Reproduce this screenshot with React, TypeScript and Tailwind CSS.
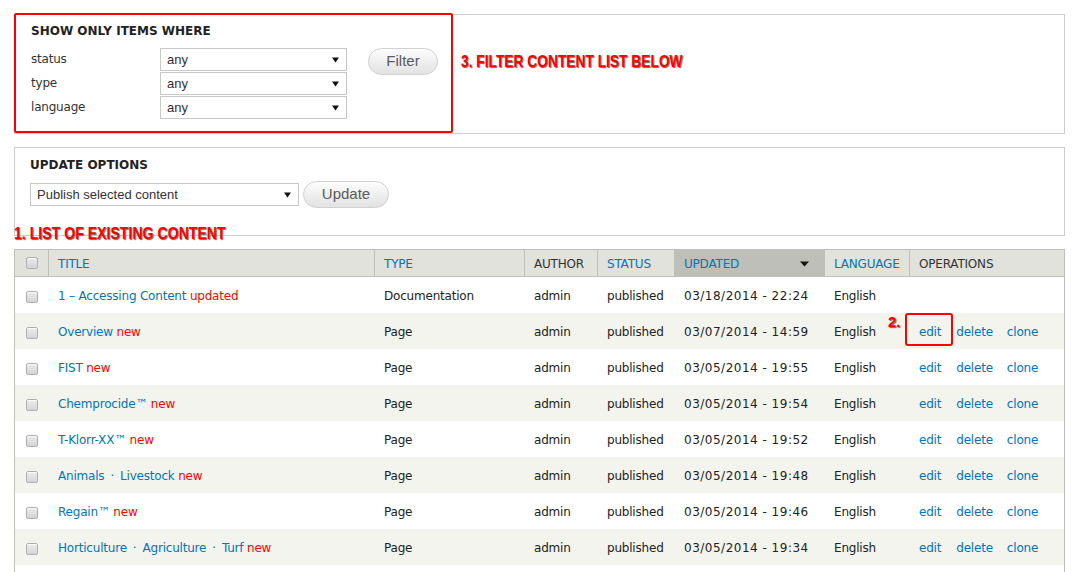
import React from 'react';

type Row = {
  title: string[];
  flag: string;
  type: string;
  updated: string;
  ops: boolean;
};

const rows: Row[] = [
  { title: ['1 – Accessing Content'], flag: 'updated', type: 'Documentation', updated: '03/18/2014 - 22:24', ops: false },
  { title: ['Overview'], flag: 'new', type: 'Page', updated: '03/07/2014 - 14:59', ops: true },
  { title: ['FIST'], flag: 'new', type: 'Page', updated: '03/05/2014 - 19:55', ops: true },
  { title: ['Chemprocide™'], flag: 'new', type: 'Page', updated: '03/05/2014 - 19:54', ops: true },
  { title: ['T-Klorr-XX™'], flag: 'new', type: 'Page', updated: '03/05/2014 - 19:52', ops: true },
  { title: ['Animals', 'Livestock'], flag: 'new', type: 'Page', updated: '03/05/2014 - 19:48', ops: true },
  { title: ['Regain™'], flag: 'new', type: 'Page', updated: '03/05/2014 - 19:46', ops: true },
  { title: ['Horticulture', 'Agriculture', 'Turf'], flag: 'new', type: 'Page', updated: '03/05/2014 - 19:34', ops: true },
];

function Caret() {
  return (
    <svg width="7" height="6" viewBox="0 0 7 6" className="shrink-0">
      <path d="M0 0.5h7L3.5 5.5z" fill="#111" />
    </svg>
  );
}

function Checkbox() {
  return (
    <span className="block h-[12px] w-[12px] rounded-[2px] border border-[#b0b0b0] bg-linear-to-b from-[#ececec] to-[#d4d4d4] shadow-[inset_0_1px_0_#fafafa]" />
  );
}

function SelectBox({ value, className }: { value: string; className: string }) {
  return (
    <div
      className={`flex h-[23px] items-center justify-between border border-[#c8c8c8] bg-white pl-[6px] pr-[7px] font-['Liberation_Sans',sans-serif] text-[13px] tracking-normal text-[#333] ${className}`}
    >
      <span>{value}</span>
      <Caret />
    </div>
  );
}

function Button({ label, className }: { label: string; className: string }) {
  return (
    <button
      className={`flex h-[27px] items-center justify-center rounded-full border border-[#d0d0d0] bg-linear-to-b from-[#fdfdfd] to-[#e2e2e2] font-['Liberation_Sans',sans-serif] text-[15px] tracking-normal text-[#5a5a5a] ${className}`}
    >
      {label}
    </button>
  );
}

const note =
  "whitespace-nowrap font-['Liberation_Sans',sans-serif] font-bold leading-[20px] tracking-normal text-[#f00] [text-shadow:1px_1px_1px_#666] origin-left";

const cols = 'grid grid-cols-[33px_326px_150px_73px_77px_150px_85px_155px]';

export default function App() {
  return (
    <div className="h-[572px] overflow-hidden bg-white pl-[14px] pt-[14px] font-['DejaVu_Sans',sans-serif] text-[12px] tracking-[-0.2px] text-[#222]">
      <div className="w-[1051px]">
        {/* filters */}
        <div className="flex h-[120px] border border-[#ccc]">
          <div className="-ml-px -mt-[2px] h-[120px] w-[439px] shrink-0 rounded-[2px] border-2 border-[#f00] pl-[15px] pt-[9px]">
            <h2 className="font-bold leading-[15px] tracking-normal">SHOW ONLY ITEMS WHERE</h2>
            <div className="mt-[9px] flex items-start">
              <div className="grid grid-cols-[129px_187px] gap-y-px text-[#333]">
                <span className="self-center leading-[15px]">status</span>
                <SelectBox value="any" className="w-[187px]" />
                <span className="self-center leading-[15px]">type</span>
                <SelectBox value="any" className="w-[187px]" />
                <span className="self-center leading-[15px]">language</span>
                <SelectBox value="any" className="w-[187px]" />
              </div>
              <Button label="Filter" className="ml-[21px] w-[70px]" />
            </div>
          </div>
          <div className={`ml-[8px] mt-[37px] self-start scale-x-[0.81] text-[17px] ${note}`}>3. FILTER CONTENT LIST BELOW</div>
        </div>

        {/* update options */}
        <div className="relative mt-[13px] h-[89px] border border-[#ccc] px-[15px] pt-[10px]">
          <h2 className="font-bold leading-[15px] tracking-normal">UPDATE OPTIONS</h2>
          <div className="mt-[8px] flex h-[27px] items-center">
            <SelectBox value="Publish selected content" className="w-[269px]" />
            <Button label="Update" className="ml-[4px] w-[86px]" />
          </div>
          <div className={`absolute -left-px top-[76px] scale-x-[0.83] text-[17px] ${note}`}>1. LIST OF EXISTING CONTENT</div>
        </div>

        {/* content table */}
        <div className="mt-[13px] h-[400px] border border-[#bebfb9]">
          <div className={`${cols} h-[27px] border-b border-[#bebfb9] bg-[#e1e2dc] uppercase`}>
            <div className="flex items-center justify-center">
              <Checkbox />
            </div>
            <div className="flex items-center border-l border-[#bebfb9] pl-[9px] pt-[2px] text-[#0074bd]">Title</div>
            <div className="flex items-center border-l border-[#bebfb9] pl-[9px] pt-[2px] text-[#0074bd]">Type</div>
            <div className="flex items-center border-l border-[#bebfb9] pl-[9px] pt-[2px] text-[#333]">Author</div>
            <div className="flex items-center border-l border-[#bebfb9] pl-[9px] pt-[2px] text-[#0074bd]">Status</div>
            <div className="flex items-center justify-between border-l border-[#bebfb9] bg-[#bebfb9] pl-[9px] pr-[15px] pt-[2px] text-[#0074bd]">
              <span>Updated</span>
              <svg width="9" height="6" viewBox="0 0 9 6">
                <path d="M0 0.5h9L4.5 5.5z" fill="#111" />
              </svg>
            </div>
            <div className="flex items-center border-l border-[#bebfb9] pl-[9px] pt-[2px] text-[#0074bd]">Language</div>
            <div className="flex items-center border-l border-[#bebfb9] pl-[9px] pt-[2px] text-[#333]">Operations</div>
          </div>

          {rows.map((row, i) => (
            <div key={i} className={`${cols} h-[36px] items-center pt-[2px] ${i % 2 === 1 ? 'bg-[#f3f4ee]' : 'bg-white'}`}>
              <div className="flex justify-center pt-[2px]">
                <Checkbox />
              </div>
              <div className="whitespace-nowrap pl-[10px]">
                {row.title.map((part, j) => (
                  <React.Fragment key={j}>
                    {j > 0 && <span className="px-[6px] text-[#0074bd]">·</span>}
                    <a className="text-[#0074bd]">{part}</a>
                  </React.Fragment>
                ))}{' '}
                <span className="text-[#f00]">{row.flag}</span>
              </div>
              <div className="pl-[10px]">{row.type}</div>
              <div className="pl-[10px]">admin</div>
              <div className="pl-[10px]">published</div>
              <div className="whitespace-nowrap pl-[10px] tracking-[0.5px]">{row.updated}</div>
              <div className="pl-[10px]">English</div>
              <div className="relative flex pl-[10px] text-[#0074bd]">
                {row.ops && (
                  <>
                    <a>edit</a>
                    <a className="ml-[15px]">delete</a>
                    <a className="ml-[14px]">clone</a>
                  </>
                )}
                {i === 1 && (
                  <>
                    <span className="absolute -left-[4px] -top-[10px] h-[33px] w-[48px] rounded-[3px] border-2 border-[#f00]" />
                    <span className={`absolute -left-[21px] -top-[11px] text-[15px] ${note}`}>2.</span>
                  </>
                )}
              </div>
            </div>
          ))}
        </div>
      </div>
    </div>
  );
}
